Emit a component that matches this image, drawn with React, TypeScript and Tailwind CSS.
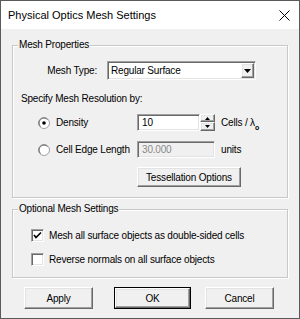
import React from "react";

const sunken =
  "border border-t-[#a0a0a0] border-l-[#a0a0a0] border-b-white border-r-white shadow-[inset_1px_1px_0_#696969,inset_-1px_-1px_0_#e3e3e3]";
const raised =
  "border border-t-white border-l-white border-b-[#696969] border-r-[#696969] shadow-[inset_-1px_-1px_0_#a0a0a0,inset_1px_1px_0_#e3e3e3] bg-[#f0f0f0]";

function Radio({ checked }: { checked?: boolean }) {
  return (
    <svg width="12" height="12" viewBox="0 0 12 12">
      <circle cx="6" cy="6" r="5.5" fill="#fff" stroke="#a0a0a0" strokeWidth="1" />
      <path d="M9.5 2.5 A4.9 4.9 0 0 0 2.5 9.5" fill="none" stroke="#696969" strokeWidth="1" />
      {checked && <circle cx="6" cy="6" r="1.8" fill="#000" />}
    </svg>
  );
}

function Check({ checked }: { checked?: boolean }) {
  return (
    <div className={`w-[13px] h-[13px] bg-white ${sunken} flex items-center justify-center`}>
      {checked && (
        <svg width="9" height="9" viewBox="0 0 9 9">
          <path d="M1 4 L3 6.5 L8 1.5" fill="none" stroke="#000" strokeWidth="1.6" />
        </svg>
      )}
    </div>
  );
}

function Group({ title, className, children }: { title: string; className?: string; children: React.ReactNode }) {
  return (
    <div className={`relative border border-[#c8c8c8] shadow-[inset_1px_1px_0_#fff,1px_1px_0_#fff] ${className ?? ""}`}>
      <span className="absolute left-[5px] top-[-8px] px-[1px] bg-[#f0f0f0] leading-[14px] whitespace-nowrap">{title}</span>
      {children}
    </div>
  );
}

export default function App() {
  return (
    <div
      className="w-[300px] h-[319px] bg-[#f0f0f0] border border-[#5a5a5a] flex flex-col text-[10px] tracking-[-0.18px] text-black"
      style={{ fontFamily: '"Liberation Sans", Arial, sans-serif' }}
    >
      <div className="h-[28px] bg-white flex items-center justify-between pl-[7px] pr-[8px] shrink-0">
        <span className="text-[11px] tracking-[0px]">Physical Optics Mesh Settings</span>
        <svg width="11" height="11" viewBox="0 0 11 11" className="mr-[1px]">
          <path d="M0.5 0.5 L10.5 10.5 M10.5 0.5 L0.5 10.5" stroke="#000" strokeWidth="1" />
        </svg>
      </div>

      <div className="px-[11px] pt-[16px] flex flex-col">
        <Group title="Mesh Properties" className="h-[153px]">
          <div className="flex items-center mt-[15px]">
            <span className="w-[84px] text-right">Mesh Type:</span>
            <div className={`ml-[10px] w-[149px] h-[19px] bg-white ${sunken} flex items-center justify-between pl-[3px] pr-[1px]`}>
              <span>Regular Surface</span>
              <div className={`w-[13px] h-[15px] ${raised} flex items-center justify-center`}>
                <svg width="7" height="4" viewBox="0 0 7 4">
                  <path d="M0 0 H7 L3.5 4 Z" fill="#000" />
                </svg>
              </div>
            </div>
          </div>
          <div className="ml-[8px] mt-[12px] leading-[14px]">Specify Mesh Resolution by:</div>
          <div className="flex items-center mt-[8px] h-[17px]">
            <div className="ml-[25px] w-[12px] h-[12px]"><Radio checked /></div>
            <span className="ml-[6px] w-[81px] whitespace-nowrap">Density</span>
            <div className={`w-[63px] h-[17px] bg-white ${sunken} flex items-center pl-[4px]`}>10</div>
            <div className="w-[15px] h-[17px] flex flex-col">
              <div className={`h-[8px] ${raised} flex items-center justify-center`}>
                <svg width="5" height="3" viewBox="0 0 5 3"><path d="M2.5 0 L5 3 H0 Z" fill="#000" /></svg>
              </div>
              <div className={`h-[9px] ${raised} flex items-center justify-center`}>
                <svg width="5" height="3" viewBox="0 0 5 3"><path d="M0 0 H5 L2.5 3 Z" fill="#000" /></svg>
              </div>
            </div>
            <span className="ml-[6px] whitespace-nowrap">
              Cells / λ<span className="text-[7px] font-bold relative top-[4px]">o</span>
            </span>
          </div>
          <div className="flex items-center mt-[10px] h-[17px]">
            <div className="ml-[25px] w-[12px] h-[12px]"><Radio /></div>
            <span className="ml-[6px] w-[81px] whitespace-nowrap">Cell Edge Length</span>
            <div className={`w-[78px] h-[17px] bg-[#f0f0f0] ${sunken} flex items-center pl-[4px] text-[#8a8a8a]`}>30.000</div>
            <span className="ml-[6px]">units</span>
          </div>
          <div className="flex mt-[9px]">
            <div className={`ml-[124px] w-[104px] h-[20px] ${raised} flex items-center justify-center whitespace-nowrap`}>Tessellation Options</div>
          </div>
        </Group>

        <Group title="Optional Mesh Settings" className="h-[69px] mt-[11px]">
          <div className="flex items-center mt-[19px] h-[13px]">
            <div className="ml-[18px]"><Check checked /></div>
            <span className="ml-[5px] whitespace-nowrap">Mesh all surface objects as double-sided cells</span>
          </div>
          <div className="flex items-center mt-[11px] h-[13px]">
            <div className="ml-[18px]"><Check /></div>
            <span className="ml-[5px] whitespace-nowrap">Reverse normals on all surface objects</span>
          </div>
        </Group>

        <div className="flex mt-[9px]">
          <div className={`ml-[12px] w-[69px] h-[22px] ${raised} flex items-center justify-center`}>Apply</div>
          <div className="ml-[21px] w-[77px] h-[22px] border border-black">
            <div className={`w-full h-full ${raised} flex items-center justify-center`}>OK</div>
          </div>
          <div className={`ml-[14px] w-[69px] h-[22px] ${raised} flex items-center justify-center`}>Cancel</div>
        </div>
      </div>
    </div>
  );
}
